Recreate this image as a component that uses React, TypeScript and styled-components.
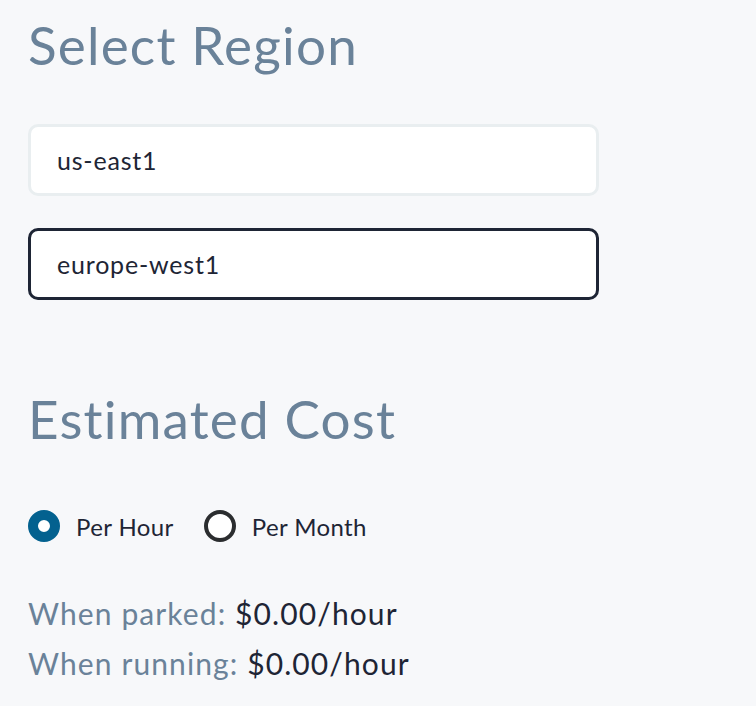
import React, { useState } from "react";
import styled, { createGlobalStyle } from "styled-components";

const GlobalStyle = createGlobalStyle`
  html, body {
    margin: 0;
    padding: 0;
    background: #f7f8fa;
  }
  body {
    font-family: Lato, "Open Sans", sans-serif;
    color: #1e2535;
  }
`;

const Page = styled.div`
  padding: 13px 28px 0 28px;
`;

const Heading = styled.h2`
  margin: 0;
  font-size: 53px;
  font-weight: 400;
  line-height: 64px;
  letter-spacing: 1.2px;
  color: #6a8299;
`;

const InputStack = styled.div`
  display: flex;
  flex-direction: column;
  gap: 32px;
  width: 571px;
  margin-top: 47px;
`;

const RegionInput = styled.input<{ $active?: boolean }>`
  box-sizing: border-box;
  height: 72px;
  width: 100%;
  padding: 0 26px;
  border-radius: 10px;
  border: 3px solid ${(p) => (p.$active ? "#1e2535" : "#e9eef0")};
  background: #ffffff;
  font-family: Lato, "Open Sans", sans-serif;
  font-size: 25px;
  letter-spacing: 0.8px;
  color: #1e2535;
  outline: none;
`;

const CostHeading = styled(Heading)`
  margin-top: 87px;
`;

const RadioRow = styled.div`
  display: flex;
  align-items: center;
  gap: 30px;
  margin-top: 59px;
`;

const RadioLabel = styled.label`
  display: flex;
  align-items: center;
  gap: 16px;
  font-size: 24px;
  letter-spacing: 0.4px;
  color: #1e2535;
  cursor: pointer;
`;

const RadioDot = styled.span<{ $checked?: boolean }>`
  box-sizing: border-box;
  width: 32px;
  height: 32px;
  border-radius: 50%;
  background: #ffffff;
  border: ${(p) => (p.$checked ? "10px solid #03618f" : "4px solid #2b2d2f")};
`;

const Costs = styled.div`
  margin-top: 46px;
  font-size: 30px;
  line-height: 50px;
  letter-spacing: 1.1px;
`;

const Line = styled.div``;

const Label = styled.span`
  color: #6a8299;
`;

const Value = styled.span`
  color: #1e2535;
`;

export default function App() {
  const [mode, setMode] = useState<"hour" | "month">("hour");
  const unit = mode === "hour" ? "hour" : "month";

  return (
    <>
      <GlobalStyle />
      <Page>
        <Heading>Select Region</Heading>
        <InputStack>
          <RegionInput defaultValue="us-east1" />
          <RegionInput $active defaultValue="europe-west1" />
        </InputStack>

        <CostHeading>Estimated Cost</CostHeading>
        <RadioRow>
          <RadioLabel onClick={() => setMode("hour")}>
            <RadioDot $checked={mode === "hour"} />
            Per Hour
          </RadioLabel>
          <RadioLabel onClick={() => setMode("month")}>
            <RadioDot $checked={mode === "month"} />
            Per Month
          </RadioLabel>
        </RadioRow>

        <Costs>
          <Line>
            <Label>When parked:</Label> <Value>$0.00/{unit}</Value>
          </Line>
          <Line>
            <Label>When running:</Label> <Value>$0.00/{unit}</Value>
          </Line>
        </Costs>
      </Page>
    </>
  );
}
